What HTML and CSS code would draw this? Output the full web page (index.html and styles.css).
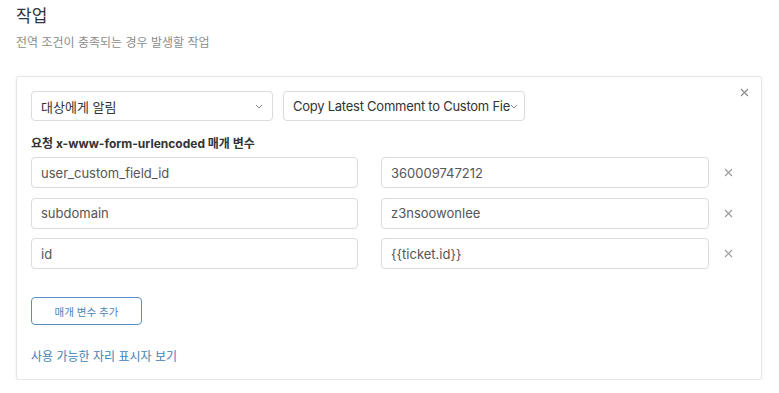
FILE: index.html
```html
<!DOCTYPE html>
<html lang="ko">
<head>
<meta charset="utf-8">
<link rel="stylesheet" href="styles.css">
</head>
<body>
<div class="page">
  <h1 class="title">작업</h1>
  <p class="subtitle">전역 조건이 충족되는 경우 발생할 작업</p>
  <div class="card">
    <button class="card-close" aria-label="닫기">
      <svg width="9" height="9" viewBox="0 0 9 9"><path d="M1 1L8 8M8 1L1 8" stroke="#8a8a8a" stroke-width="1.1" fill="none"/></svg>
    </button>
    <div class="selects">
      <div class="select">
        <span class="select-text">대상에게 알림</span>
        <svg class="chev" width="8" height="5" viewBox="0 0 8 5"><path d="M1 1L4 4L7 1" stroke="#8a8a8a" stroke-width="1" fill="none"/></svg>
      </div>
      <div class="select select-narrow">
        <span class="select-text tight">Copy Latest Comment to Custom Fie</span>
        <svg class="chev" width="8" height="5" viewBox="0 0 8 5"><path d="M1 1L4 4L7 1" stroke="#8a8a8a" stroke-width="1" fill="none"/></svg>
      </div>
    </div>
    <div class="label">요청 x-www-form-urlencoded 매개 변수</div>
    <div class="rows">
      <div class="row">
        <div class="input">user_custom_field_id</div>
        <div class="input">360009747212</div>
        <span class="remove"><svg width="9" height="9" viewBox="0 0 9 9"><path d="M1 1L8 8M8 1L1 8" stroke="#9a9a9a" stroke-width="1.1" fill="none"/></svg></span>
      </div>
      <div class="row">
        <div class="input">subdomain</div>
        <div class="input">z3nsoowonlee</div>
        <span class="remove"><svg width="9" height="9" viewBox="0 0 9 9"><path d="M1 1L8 8M8 1L1 8" stroke="#9a9a9a" stroke-width="1.1" fill="none"/></svg></span>
      </div>
      <div class="row">
        <div class="input">id</div>
        <div class="input">{{ticket.id}}</div>
        <span class="remove"><svg width="9" height="9" viewBox="0 0 9 9"><path d="M1 1L8 8M8 1L1 8" stroke="#9a9a9a" stroke-width="1.1" fill="none"/></svg></span>
      </div>
    </div>
    <button class="add-btn">매개 변수 추가</button>
    <a class="link" href="#">사용 가능한 자리 표시자 보기</a>
  </div>
</div>
</body>
</html>
```

FILE: styles.css
```css
* { box-sizing: border-box; }
html, body { margin: 0; padding: 0; background: #fff; }
body {
  font-family: Inter, "Noto Sans CJK KR", sans-serif;
  color: #333;
}
.page {
  padding: 5px 17px 0 16px;
}
.title {
  margin: 0;
  font-size: 17px;
  font-weight: 400;
  line-height: 22px;
  color: #2f3941;
}
.subtitle {
  margin: 8px 0 0;
  font-size: 12px;
  line-height: 16px;
  color: #8c8c8c;
}
.card {
  position: relative;
  margin-top: 25px;
  width: 746px;
  height: 304px;
  border: 1px solid #e6e6e6;
  border-radius: 3px;
  box-shadow: 0 1px 4px rgba(0,0,0,0.06);
  padding: 14px 14px 0 14px;
  background: #fff;
}
.card-close {
  position: absolute;
  top: 9px;
  right: 11px;
  width: 12px;
  height: 12px;
  padding: 0;
  border: 0;
  background: none;
  display: flex;
  align-items: center;
  justify-content: center;
}
.selects {
  display: flex;
  gap: 10px;
}
.select {
  width: 242px;
  height: 30px;
  border: 1px solid #d8dcde;
  border-radius: 4px;
  display: flex;
  align-items: center;
  padding: 0 9px 0 9px;
  font-size: 13px;
  color: #333;
}
.select-text { flex: 1; white-space: nowrap; }
.tight { letter-spacing: -0.25px; }
.select .chev { flex: none; margin-left: 4px; }
.select-narrow { padding-right: 8px; }
.select-narrow .chev { margin-left: 0; }
.label {
  margin-top: 15px;
  font-size: 12px;
  font-weight: 700;
  line-height: 16px;
  color: #333;
}
.rows {
  margin-top: 5px;
  display: flex;
  flex-direction: column;
  gap: 9.5px;
}
.row {
  display: flex;
  align-items: center;
}
.input {
  height: 31px;
  border: 1px solid #d8dcde;
  border-radius: 4px;
  display: flex;
  align-items: center;
  padding: 0 9px;
  font-size: 13px;
  color: #555;
}
.row .input:first-child { width: 327px; }
.row .input:nth-child(2) { width: 328px; margin-left: 23px; }
.remove {
  margin-left: 15px;
  display: flex;
  width: 9px;
  height: 9px;
}
.add-btn {
  display: block;
  margin-top: 28px;
  width: 111px;
  height: 28px;
  border: 1px solid #5b8ec4;
  border-radius: 4px;
  background: #fff;
  color: #4f7fb0;
  font-family: inherit;
  font-size: 10.5px;
  padding: 0;
}
.link {
  display: block;
  margin-top: 24px;
  font-size: 12px;
  line-height: 16px;
  color: #3f82b5;
  text-decoration: none;
}
```
